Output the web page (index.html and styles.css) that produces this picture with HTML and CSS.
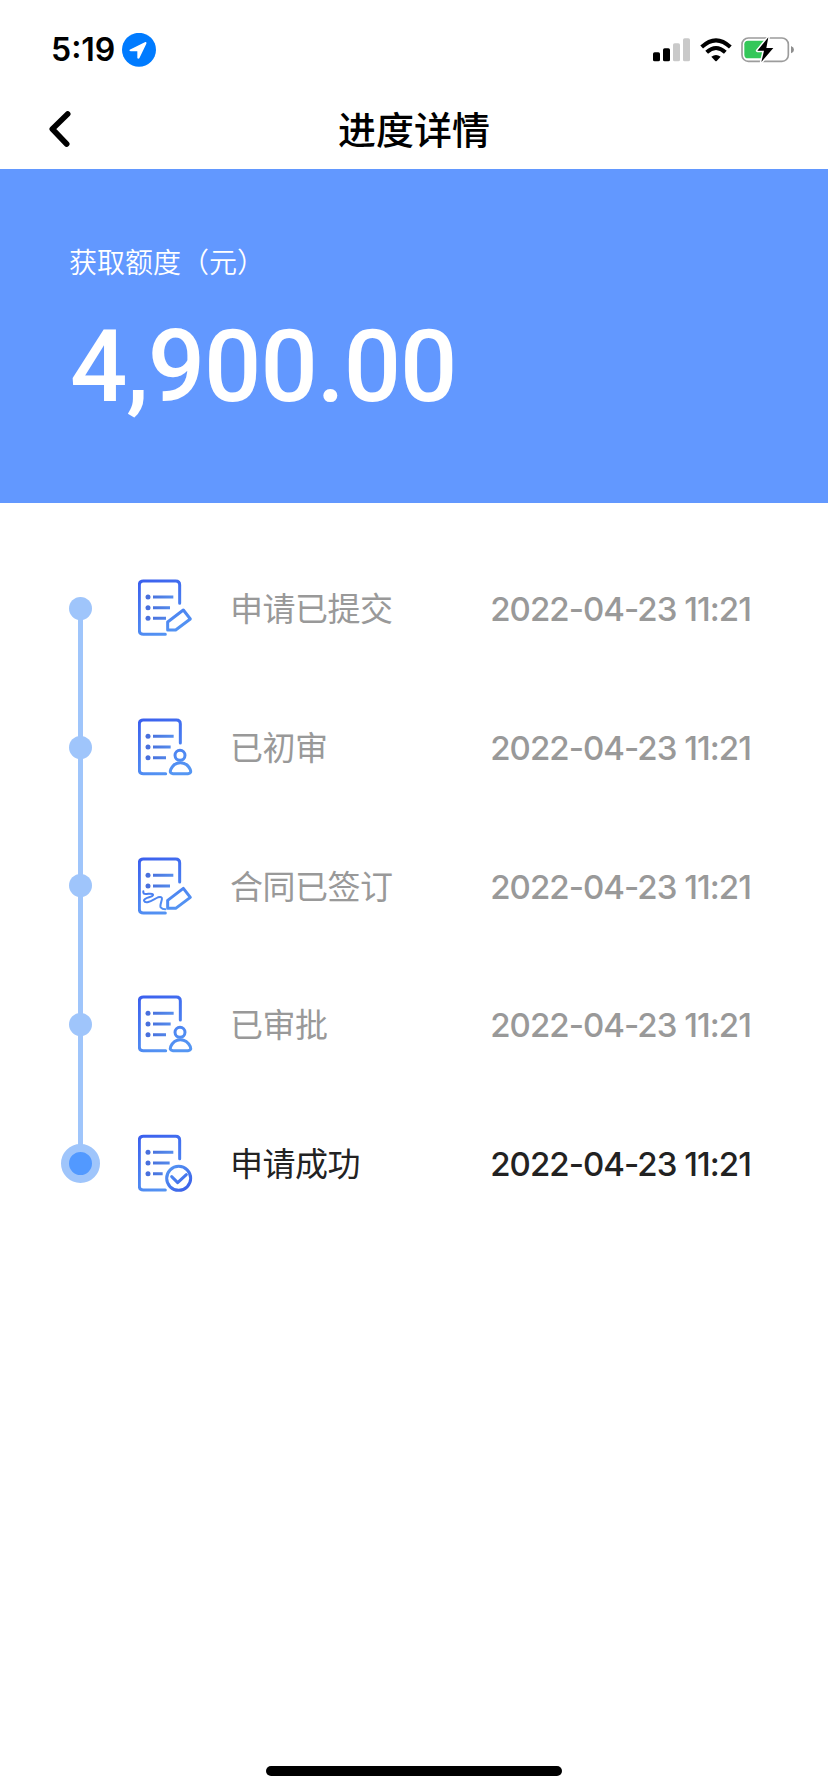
FILE: index.html
```
<!DOCTYPE html>
<html lang="zh-CN">
<head>
<meta charset="utf-8">
<title>进度详情</title>
<link rel="stylesheet" href="styles.css">
</head>
<body>
<svg class="defs" width="0" height="0">
  <defs>
    <linearGradient id="ink" gradientUnits="userSpaceOnUse" x1="20" y1="0" x2="90" y2="174">
      <stop offset="0" stop-color="#3b60ee"/><stop offset="1" stop-color="#5596f3"/>
    </linearGradient>
    <linearGradient id="rule" gradientUnits="userSpaceOnUse" x1="20" y1="0" x2="110" y2="0">
      <stop offset="0" stop-color="#4468d8"/><stop offset="1" stop-color="#5790ef"/>
    </linearGradient>
    <linearGradient id="seal" gradientUnits="userSpaceOnUse" x1="90" y1="100" x2="145" y2="170">
      <stop offset="0" stop-color="#5596f3"/><stop offset="1" stop-color="#3b60e8"/>
    </linearGradient>
  </defs>
</svg>
<div class="screen">
  <header class="status">
    <span class="time">5:19</span>
    <svg class="location" viewBox="0 0 102 102"><circle cx="51" cy="50.5" r="51" fill="#007bff"/><path d="M23 50L70 27Q75 26 73 32L52 76Q48 79 46 75V55H26Q20 54 23 50Z" fill="#fff"/></svg>
    <svg class="signal" viewBox="0 0 111 72"><rect y="43" width="21" height="27" rx="5"/><rect x="30" y="31" width="21" height="39" rx="5"/><g fill="#c9c9c9"><rect x="60" y="16" width="21" height="54" rx="5"/><rect x="90" y="1" width="21" height="69" rx="5"/></g></svg>
    <svg class="wifi" viewBox="0 0 96 72"><g fill="none" stroke="#000" stroke-width="12"><path d="M5 27Q48-13 91 27"/><path d="M20 43Q48 17 76 43"/></g><path d="M34 56Q48 46 62 56L50 69Q48 71 46 69Z"/></svg>
    <svg class="battery" viewBox="0 0 159 81"><rect x="3" y="6" width="139" height="70" rx="19" fill="#fff" stroke="#9c9c9c" stroke-width="5"/><path d="M150 30Q159 34 159 41T150 52Z" fill="#8e8e8e"/><path d="M21 14H72V67H21Q10 67 10 56V25Q10 14 21 14Z" fill="#34c759"/><path d="M82 4L49 44H69L61 78L97 36H76Z" fill="#000" stroke="#fff" stroke-width="9" paint-order="stroke" stroke-linejoin="round"/></svg>
  </header>
  <nav class="nav">
    <svg class="back" viewBox="0 0 66 108"><path d="M56 9L10 54L53 99" fill="none" stroke="#000" stroke-width="17" stroke-linecap="round" stroke-linejoin="round"/></svg>
    <h1 class="title">进度详情</h1>
  </nav>
  <section class="hero">
    <div class="caption">获取额度（元）</div>
    <div class="amount">4,900.00</div>
  </section>
  <main class="steps">
    <div class="step">
      <span class="rail"><i class="dot"></i></span>
      <svg class="icon" viewBox="0 0 168 174"><g class="line"><path d="M125 73V18Q125 6 113 6H16Q4 6 4 18V154Q4 166 16 166H82"/><path d="M136 93L157 120L113 153H89V129Z"/></g><g class="rules"><path d="M45 54H106M45 86H96M45 118H84"/></g><g class="bullets"><circle cx="30" cy="54" r="7.5"/><circle cx="30" cy="86" r="7.5"/><circle cx="30" cy="118" r="7.5"/></g></svg>
      <span class="label">申请已提交</span><time class="date">2022-04-23 11:21</time>
    </div>
    <div class="step">
      <span class="rail"><i class="dot"></i></span>
      <svg class="icon" viewBox="0 0 168 174"><g class="line"><path d="M127 75V18Q127 6 115 6H16Q4 6 4 18V155Q4 167 16 167H83"/><circle cx="126" cy="112" r="15"/><path d="M105 167Q94 166 98 155C104 141 115 134 127 134S151 142 157 155Q161 166 150 167Z"/></g><g class="rules"><path d="M45 55H107M45 87H98M45 119H84"/></g><g class="bullets"><circle cx="30" cy="55" r="7.5"/><circle cx="30" cy="87" r="7.5"/><circle cx="30" cy="119" r="7.5"/></g></svg>
      <span class="label">已初审</span><time class="date">2022-04-23 11:21</time>
    </div>
    <div class="step">
      <span class="rail"><i class="dot"></i></span>
      <svg class="icon" viewBox="0 0 168 174"><g class="line"><path d="M125 75V18Q125 6 113 6H16Q4 6 4 18V156Q4 168 16 168H82"/><path d="M136 94L157 121L113 154H89V130Z"/><path class="fine" d="M16 103C14 119 38 105 45 112C48 122 18 119 18 131C23 145 48 126 60 121C85 114 62 142 68 151Q73 157 82 157"/></g><g class="rules"><path d="M45 55H106M45 87H96"/></g><g class="bullets"><circle cx="30" cy="55" r="7.5"/><circle cx="30" cy="87" r="7.5"/></g></svg>
      <span class="label">合同已签订</span><time class="date">2022-04-23 11:21</time>
    </div>
    <div class="step">
      <span class="rail"><i class="dot"></i></span>
      <svg class="icon" viewBox="0 0 168 174"><g class="line"><path d="M127 75V18Q127 6 115 6H16Q4 6 4 18V155Q4 167 16 167H83"/><circle cx="126" cy="112" r="15"/><path d="M105 167Q94 166 98 155C104 141 115 134 127 134S151 142 157 155Q161 166 150 167Z"/></g><g class="rules"><path d="M45 55H107M45 87H98M45 119H84"/></g><g class="bullets"><circle cx="30" cy="55" r="7.5"/><circle cx="30" cy="87" r="7.5"/><circle cx="30" cy="119" r="7.5"/></g></svg>
      <span class="label">已审批</span><time class="date">2022-04-23 11:21</time>
    </div>
    <div class="step current">
      <span class="rail"><i class="dot"></i></span>
      <svg class="icon" viewBox="0 0 168 174"><g class="line"><path d="M125 74V19Q125 7 113 7H16Q4 7 4 19V156Q4 168 16 168H82"/></g><g class="rules"><path d="M45 55H106M45 87H95M45 119H74"/></g><g class="bullets"><circle cx="30" cy="55" r="7.5"/><circle cx="30" cy="87" r="7.5"/><circle cx="30" cy="119" r="7.5"/></g><g class="seal"><circle cx="122" cy="133" r="36"/><path d="M101 128L119 146L145 122"/></g></svg>
      <span class="label">申请成功</span><time class="date">2022-04-23 11:21</time>
    </div>
  </main>
  <footer class="home"><span class="home-bar"></span></footer>
</div>
</body>
</html>
```
FILE: styles.css
```
* { box-sizing: border-box; }
body { margin: 0; background: #fff; color: #000; font-family: Inter, "Noto Sans CJK SC", sans-serif; }
svg { display: block; flex: none; }
.defs { position: absolute; }
.screen { width: 828px; height: 1792px; display: flex; flex-direction: column; overflow: hidden; }

.status { height: 99px; display: flex; align-items: center; padding-left: 51px; flex: none; }
.time { width: 71px; font-size: 32px; font-weight: 600; line-height: 40px; white-space: nowrap; }
.location { width: 34px; height: 34px; }
.signal { width: 37px; height: 24px; margin-left: 497px; }
.wifi { width: 32px; height: 24px; margin-left: 10px; }
.battery { width: 53px; height: 27px; margin-left: 9px; }

.nav { height: 70px; display: grid; grid-template-columns: 100px 1fr 100px; align-items: center; flex: none; }
.back { width: 22px; height: 36px; margin: -10px 0 0 49px; }
.title { margin: -8px 0 0; text-align: center; font-size: 38px; line-height: 56px; font-weight: 500; }

.hero { height: 334px; flex: none; background: #6298ff; color: #fff; padding: 73px 69px 0; }
.caption { font-size: 28px; line-height: 42px; font-weight: 350; }
.amount { margin-top: 23px; padding-left: 1px; font-family: Roboto, sans-serif; font-weight: 500; font-size: 101px; line-height: 120px; letter-spacing: -1.1px; }

.steps { padding-top: 36px; flex: 1; background: linear-gradient(#9fc5fb, #9fc5fb) 78px 106px / 5px 555px no-repeat; }
.step { height: 138.7px; display: grid; grid-template-columns: 77px 56px 1fr auto; align-items: center; padding: 0 77px 0 61px; color: #999; }
.rail { width: 39px; height: 100%; display: grid; place-items: center; }
.dot { width: 23px; height: 23px; border-radius: 50%; background: #9fc5fb; }
.current .dot { width: 39px; height: 39px; border: 8px solid #9fc5fb; background: #5299ff; }
.icon { width: 56px; height: 58px; }
.line, .seal, .rules { fill: none; stroke-width: 9; stroke-linejoin: round; stroke-linecap: round; }
.line { stroke: url(#ink); }
.rules { stroke: url(#rule); stroke-linecap: butt; }
.seal { stroke: url(#seal); }
.bullets { fill: #4970dd; }
.fine { stroke-width: 6; }
.label { padding: 2px 0 0 36px; font-size: 33px; line-height: 46px; letter-spacing: -0.5px; }
.date { padding-top: 2px; font-size: 33px; line-height: 46px; font-weight: 500; letter-spacing: -0.95px; white-space: nowrap; }
.current { color: #222; }

.home { height: 27px; display: flex; justify-content: center; flex: none; }
.home-bar { width: 296px; height: 10px; margin-top: 1px; border-radius: 5px; background: #000; }
```
